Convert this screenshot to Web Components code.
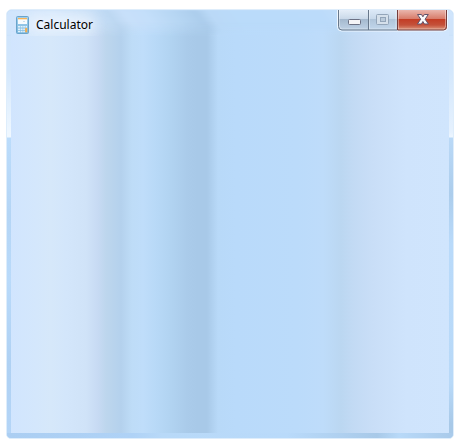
<!DOCTYPE html>
<html lang="en"><head><meta charset="utf-8"><title>Calculator</title>
<style>body{margin:0;background:#fff;width:458px;height:447px;overflow:hidden;font-family:"Noto Sans","Open Sans",sans-serif}</style></head>
<body>
<aero-window><calc-icon slot="icon"></calc-icon><window-title slot="title">Calculator</window-title><caption-buttons slot="controls"></caption-buttons></aero-window>
<script>
const define=(name,html)=>customElements.define(name,class extends HTMLElement{
  constructor(){super();this.attachShadow({mode:'open'}).innerHTML=html;}
});
define('calc-icon',`<style>:host{display:block;width:13px;height:18px;flex:none}svg{display:block}</style>
<svg width="13" height="18" viewBox="0 0 13 18">
<defs><linearGradient id="b" x2="0" y2="1"><stop stop-color="#a5cfea"/><stop offset="1" stop-color="#7bb8e0"/></linearGradient></defs>
<rect x=".5" y=".5" width="12" height="17" rx="1" fill="url(#b)" stroke="#69a5cc"/>
<rect x="2" y="2" width="9" height="6" fill="#f7fbfe"/><rect x="2" y="2" width="9" height="1.3" fill="#f7b458"/>
<path d="M7 5h2v1H7z" fill="#c9dfed"/>
<path d="M2 10h2v1.5H2zM4.600 10h2v1.5h-2zM7.200 10h1.7v1.5H7.200zM9.500 10H11v1.5H9.500zM2 12.400h2v1.5H2zM4.600 12.400h2v1.5h-2zM7.200 12.400h1.7v1.5H7.200zM2 14.800h2v1.5H2zM4.600 14.800h2v1.5h-2zM7.200 14.800h1.7v1.5H7.200z" fill="#e2f2fb"/>
<rect x="9.200" y="12" width="2" height="4.300" fill="#f5ad4c"/></svg>`);
define('window-title',`<style>:host{display:block;font-size:12px;line-height:18px;color:#000;text-shadow:0 0 6px #fff8,0 0 10px #fff8}</style><slot></slot>`);
define('caption-buttons',`<style>:host{display:block;width:112px;height:23px;flex:none}svg{display:block}</style>
<svg width="112" height="23" viewBox="0 0 112 23">
<defs>
<linearGradient id="g" x2="0" y2="1"><stop stop-color="#e5eef8"/><stop offset=".46" stop-color="#c9d8e8"/><stop offset=".47" stop-color="#a5b9ce"/><stop offset="1" stop-color="#bfd2e6"/></linearGradient>
<linearGradient id="m" x2="0" y2="1"><stop stop-color="#dce9f7"/><stop offset=".46" stop-color="#c7d8ea"/><stop offset=".47" stop-color="#b0c5da"/><stop offset="1" stop-color="#c2d7ec"/></linearGradient>
<linearGradient id="r" x2="0" y2="1"><stop stop-color="#eab6ad"/><stop offset=".46" stop-color="#d77967"/><stop offset=".47" stop-color="#c33d25"/><stop offset=".75" stop-color="#c4513a"/><stop offset="1" stop-color="#df9b82"/></linearGradient>
</defs>
<path d="M.5 1v17q0 4 4 4h102q4 0 4-4V1" fill="none" stroke="#f2f8ff" stroke-opacity=".9"/>
<path d="M1.500 1H31v20H5q-3.500 0-3.500-3.500z" fill="url(#g)"/>
<path d="M31 1h29v20H31z" fill="url(#m)"/>
<path d="M60 1h50v16.500q0 3.500-3.500 3.500H60z" fill="url(#r)"/>
<path d="M2.500 1v16q0 3 3 3H30.500M32.500 1v19H59V1M61.500 1v19H106q2.500 0 2.500-3V1" fill="none" stroke="#fff" stroke-opacity=".38"/>
<path d="M1.500 1v16.500q0 3.500 3.500 3.500H60M31.500 1v20" fill="none" stroke="#68788b"/>
<path d="M60.500 1v20h46q3 0 3-3.500V1" fill="none" stroke="#753c3b"/>
<rect x="11.500" y="10.500" width="12" height="5" rx="1" fill="#f5f4f6" stroke="#6b7083"/>
<g fill="none" stroke="#93a5b9"><rect x="39.500" y="5.500" width="12" height="10" rx="1" fill="#d5e0eb"/><rect x="43.500" y="8.500" width="5" height="4" fill="#bacada"/></g>
<path d="M80.500 5.500h4l1.400 2.300 1.400-2.300h4l-3.200 4.700 3.300 4.800h-4l-1.500-2.500-1.500 2.500h-4l3.300-4.800z" fill="#fafafa" stroke="#60526a" stroke-linejoin="round"/>
</svg>`);
define('aero-window',`<style>
:host{display:block;padding:9px 4px 8px 6px;width:448px;height:430px;
--glass:linear-gradient(90deg,#d1e5fe 0,#d4e7fc 25px,#d6e8fa 40px,#d3e6fb 55px,#d0e3f8 75px,#c7daf3 87px,#bdd6ed 95px,#b4d1ed 110px,#bedcf7 121px,#bfddfa 132px,#b8d9f7 145px,#b1d3f1 160px,#aacbea 176px,#a8c9e8 186px,#a8c9e8 196px,#b8d9f8 207px,#b9dafa 225px,#bbdbfa 285px,#bedcfa 312px,#bbd7f1 330px,#c2daf4 342px,#c9def7 362px,#cfe4fc 395px,#d0e5fd)}
.frame{height:430px;box-sizing:border-box;border:1px solid #deedfb;border-radius:6px 6px 5px 5px;overflow:hidden;display:grid;grid-template:26px 1fr 5px/4px 1fr 4px;background:#b7d8f7}
header{grid-area:1/1/2/4;position:relative;display:flex;align-items:flex-start;overflow:hidden;padding-left:9px;background:#c3ddf8}
header::after{content:"";position:absolute;inset:0 4px;background:var(--glass);-webkit-mask-image:linear-gradient(transparent 45%,#000);mask-image:linear-gradient(transparent 45%,#000)}
.streak{position:absolute;inset:0 -10px 0 -10px;transform:skewX(37deg);filter:blur(1px);background:linear-gradient(90deg,#d0e5fc 0,#d4e7fc 65px,#c8dff7 100px,#bdd8f2 119px,#c8e0fa 134px,#c4dffa 155px,#b6d6f3 185px,#accdec 207px,#bad9f7 220px,#badbfa 245px,#bbdbfa 330px,#cce2fa 385px,#d0e5fc)}
.glow{position:absolute;z-index:1;left:18px;top:5px;width:70px;height:18px;border-radius:12px;background:#edf5fdcc;filter:blur(7px)}
::slotted(calc-icon){position:relative;z-index:2;margin:6px 7px 0 0}
::slotted(window-title){position:relative;z-index:2;margin-top:6px}
::slotted(caption-buttons){position:relative;z-index:2;margin:-1px 4px 0 auto}
.left,.right{background:linear-gradient(#d0e5fc,#d3e7fc 33px,#eef7ff 96px,#f0f8ff 101px,#bbdcfb 102px,#b4d5f5 178px,#b9dafa 243px,#afd1f3 328px,#b4d5f7)}
.right{background:linear-gradient(#d0e5fc,#d3e7fc 33px,#e5f1fe 96px,#edf6ff 101px,#bad9f7 102px,#accdec 158px,#b9dafa 208px,#b8d9f8 348px,#a8c9e8 388px)}
main{background:var(--glass)}
footer{grid-area:3/1/4/4;background:linear-gradient(90deg,#abcef2,#afd2f6 125px,#b8d9f8 155px,#b9dafa 280px,#a8c9e8 370px,#b8d9f8 392px,#a9caea)}
</style><section class="frame"><header><div class="streak"></div><div class="glow"></div><slot name="icon"></slot><slot name="title"></slot><slot name="controls"></slot></header><div class="left"></div><main></main><div class="right"></div><footer></footer></section>`);
</script></body></html>
